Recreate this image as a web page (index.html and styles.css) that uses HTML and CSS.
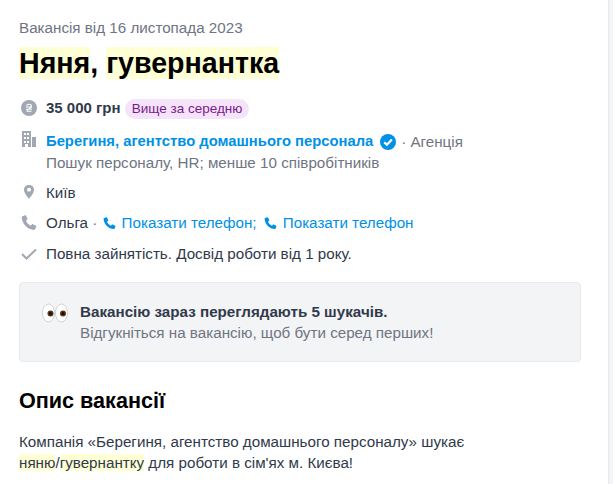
FILE: index.html
```html
<!DOCTYPE html>
<html>
<head>
  <title>Няня, гувернантка</title>
  <link rel="stylesheet" href="styles.css">
</head>
<body>
  <main class="page">
    <p class="date">Вакансія від 16 листопада 2023</p>
    <h1 class="title"><mark>Няня</mark>, <mark>гувернантка</mark></h1>

    <ul class="facts">
      <li class="fact fact-salary">
        <svg class="icon icon-low" viewBox="0 0 16 16"><circle cx="8" cy="8" r="8" fill="#a1a7b3"/><path d="M5.600 6C5.800 4.900 6.800 4.300 8 4.300c1.400 0 2.400.8 2.400 1.900 0 1.500-1.900 2.200-3.200 3.200-.7.5-1.100 1.100-1.100 1.900h4.400M5 7h6M5 9.200h6" fill="none" stroke="#fff" stroke-width="1.100"/></svg>
        <div class="fact-body">
          <b class="salary">35 000 грн</b>
          <span class="badge">Вище за середню</span>
        </div>
      </li>
      <li class="fact">
        <svg class="icon icon-high" viewBox="0 0 16 16"><path fill="#a1a7b3" fill-rule="evenodd" d="M1 0h9v16H7v-3H4v3H1zM3 2v2h2V2zm3 0v2h2V2zM3 6v2h2V6zm3 0v2h2V6zM3 10v2h2v-2zm3 0v2h2v-2z"/><path fill="#a1a7b3" d="M11 6h4v10h-4z"/></svg>
        <div class="fact-body">
          <div class="company-line">
            <a class="company" href="#">Берегиня, агентство домашнього персонала</a>
            <svg class="verified" viewBox="0 0 16 16"><circle cx="8" cy="8" r="8" fill="#0091e6"/><path d="M4.200 8.200l2.700 2.600 5-5.200" fill="none" stroke="#fff" stroke-width="2.200"/></svg>
            <span class="dot">·</span>
            <span class="muted">Агенція</span>
          </div>
          <div class="muted">Пошук персоналу, HR; менше 10 співробітників</div>
        </div>
      </li>
      <li class="fact">
        <svg class="icon" viewBox="0 0 16 16"><path fill="#a1a7b3" fill-rule="evenodd" d="M8 2c2.800 0 5 2 5 4.800C13 10 9.500 14 8 16 6.500 14 3 10 3 6.800 3 4 5.200 2 8 2zm0 2.700a2 2 0 1 0 0 4 2 2 0 0 0 0-4z"/></svg>
        <div class="fact-body">Київ</div>
      </li>
      <li class="fact fact-contact">
        <svg class="icon icon-low" viewBox="0 0 16 16"><path fill="#a1a7b3" d="M1.500 1.200L4 .2c.4-.1.700 0 .9.400l1.500 3c.2.400.1.700-.2 1L5 5.700c.8 2 2.600 4 4.800 5l1.100-1.300c.3-.3.600-.4 1-.2l3 1.500c.4.200.500.500.4.900l-1 2.500c-.2.500-.6.800-1.100.8C7 14.900 1 9 .7 2.300c0-.5.300-.9.800-1.100z"/></svg>
        <div class="fact-body">
          Ольга
          <span class="dot">·</span>
          <a class="phone" href="#"><svg class="phone-icon" viewBox="0 0 16 16"><path fill="#0091e6" d="M1.500 1.200L4 .2c.4-.1.700 0 .9.400l1.500 3c.2.400.1.700-.2 1L5 5.700c.8 2 2.600 4 4.800 5l1.100-1.300c.3-.3.600-.4 1-.2l3 1.500c.4.200.500.500.4.900l-1 2.500c-.2.500-.6.800-1.100.8C7 14.900 1 9 .7 2.300c0-.5.300-.9.800-1.100z"/></svg>Показати телефон;</a>
          <a class="phone phone-next" href="#"><svg class="phone-icon" viewBox="0 0 16 16"><path fill="#0091e6" d="M1.500 1.200L4 .2c.4-.1.700 0 .9.400l1.500 3c.2.400.1.700-.2 1L5 5.700c.8 2 2.600 4 4.800 5l1.100-1.300c.3-.3.600-.4 1-.2l3 1.500c.4.200.500.500.4.900l-1 2.500c-.2.500-.6.800-1.100.8C7 14.900 1 9 .7 2.300c0-.5.300-.9.800-1.100z"/></svg>Показати телефон</a>
        </div>
      </li>
      <li class="fact">
        <svg class="icon icon-low" viewBox="0 0 16 16"><path d="M1 8l4.500 4.500L15 3.500" fill="none" stroke="#a1a7b3" stroke-width="2"/></svg>
        <div class="fact-body">Повна зайнятість. Досвід роботи від 1 року.</div>
      </li>
    </ul>

    <section class="notice">
      <svg class="eyes" viewBox="0 0 26 20">
        <ellipse cx="6.500" cy="10" rx="6" ry="9" fill="#fff" stroke="#cfd1d4"/>
        <ellipse cx="19.500" cy="10" rx="6" ry="9" fill="#fff" stroke="#cfd1d4"/>
        <circle cx="8.500" cy="10.500" r="3" fill="#5a3214"/>
        <circle cx="21" cy="10.500" r="3" fill="#5a3214"/>
        <circle cx="8.500" cy="10.500" r="1.500" fill="#111"/>
        <circle cx="21" cy="10.500" r="1.500" fill="#111"/>
      </svg>
      <div>
        <div class="notice-title">Вакансію зараз переглядають 5 шукачів.</div>
        <div class="notice-text">Відгукніться на вакансію, щоб бути серед перших!</div>
      </div>
    </section>

    <h2 class="section-title">Опис вакансії</h2>
    <p class="description">Компанія «Берегиня, агентство домашнього персоналу» шукає<br><mark>няню</mark>/<mark>гувернантку</mark> для роботи в сім'ях м. Києва!</p>
  </main>
  <div class="sidebar"></div>
</body>
</html>
```

FILE: styles.css
```css
html, body {
  height: 100%;
}

body {
  font-family: "Liberation Sans", Arial, sans-serif;
  font-size: 15.2px;
  color: #303a4b;
  margin: 0;
  display: flex;
  overflow: hidden;
}

mark {
  background-color: #ffffd6;
  color: inherit;
}

.page {
  box-sizing: border-box;
  width: 608px;
  flex-shrink: 0;
  padding: 18px 27px 0 19px;
}

.sidebar {
  flex: 1;
  background-color: #f3f4f6;
  border-left: 1px solid #e8e9ec;
}

.date {
  margin: 0;
  line-height: 20px;
  color: #6f7582;
}

.title {
  margin: 8px 0 0;
  font-size: 28.6px;
  line-height: 34px;
  font-weight: bold;
  color: #000;
}

.facts {
  list-style: none;
  margin: 17px 0 0;
  padding: 0;
}

.fact {
  display: flex;
  margin-bottom: 9px;
  line-height: 21px;
}

.fact-salary {
  margin-bottom: 12px;
}

.fact-contact {
  margin-bottom: 10px;
}

.icon {
  width: 16px;
  height: 16px;
  flex-shrink: 0;
  margin: 1px 9px 0 2px;
}

.icon-low {
  margin-top: 3px;
}

.icon-high {
  margin-top: 0;
}

.fact-body {
  flex: 1;
}

.salary {
  font-size: 15px;
}

.badge {
  display: inline-block;
  padding: 0 7px;
  font-size: 13.5px;
  line-height: 20px;
  color: #7b1a8c;
  background-color: #f5e3f9;
  border-radius: 10px;
}

.company-line {
  display: flex;
  align-items: center;
}

.company {
  font-size: 14.8px;
  font-weight: bold;
  color: #0091e6;
  text-decoration: none;
}

.verified {
  width: 16px;
  height: 16px;
  margin-left: 7px;
}

.dot {
  color: #6f7582;
  margin: 0 1px 0 0;
}

.company-line .dot {
  margin: 0 4px 0 5px;
}

.muted {
  color: #6f7582;
}

.phone {
  color: #0091e6;
  text-decoration: none;
}

.phone-next {
  margin-left: 3px;
}

.phone-icon {
  width: 13px;
  height: 13px;
  margin-right: 6px;
  vertical-align: -2px;
}

.notice {
  display: flex;
  align-items: center;
  height: 80px;
  box-sizing: border-box;
  margin-top: 18px;
  padding: 0 14px 0 22px;
  background-color: #f3f4f6;
  border: 1px solid #e8e9ec;
  border-radius: 4px;
}

.eyes {
  width: 26px;
  height: 20px;
  flex-shrink: 0;
  margin: 0 12px 18px 0;
}

.notice-title {
  font-weight: bold;
  line-height: 21px;
}

.notice-text {
  color: #6f7582;
  line-height: 21px;
}

.section-title {
  margin: 25px 0 0;
  font-size: 21.6px;
  line-height: 28px;
  font-weight: bold;
  color: #000;
}

.description {
  margin: 16px 0 0;
  line-height: 21px;
}
```
